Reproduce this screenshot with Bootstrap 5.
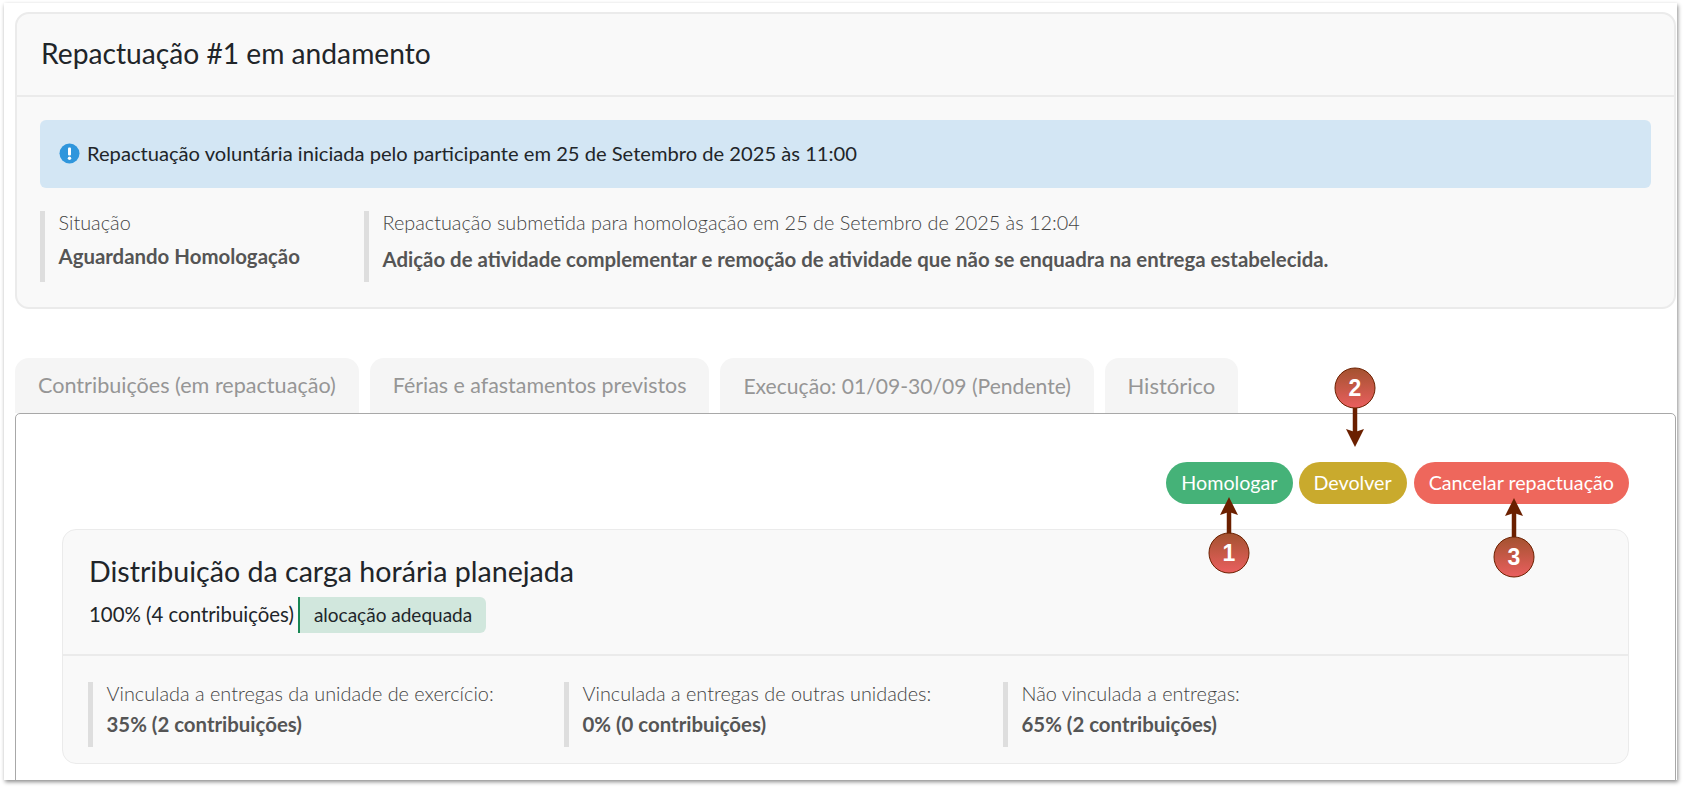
<!doctype html>
<html lang="pt-BR">

<head>
    <meta charset="utf-8">
    <meta name="viewport" content="width=device-width, initial-scale=1">
    <link href="https://cdn.jsdelivr.net/npm/bootstrap@5.3.3/dist/css/bootstrap.min.css" rel="stylesheet">
    <title>Repactuação</title>
    <style>
        html, body { height: 100%; overflow: hidden; background: #fff; }
        body { font-family: Lato, "Liberation Sans", sans-serif; font-size: 20.4px; color: #212529; }

        .quadro { position: relative; width: 1673px; height: 777px; margin: 3px 0 0 4px; padding: 9px 1px 0 11px; background: #fff; box-shadow: 1px 2px 4px rgba(0, 0, 0, .45); overflow: hidden; }

        .painel { background: #f9f9f9; border: 2px solid #ebebeb; border-radius: 14px; }
        .painel > .card-header { background: transparent; border-bottom: 2px solid #ebebeb; display: flex; align-items: center; }
        .painel-topo { height: 83px; padding: 0 24px; }
        .painel-topo h1 { font-size: 28.2px; font-weight: 400; margin: 0 0 2px; }
        .painel-corpo { padding: 23px 23px 0; height: 210px; }
        .aviso { height: 68px; margin: 0 0 23px; padding: 0 19px 2px; border: 0; border-radius: 6px; background: #d3e6f4; color: #212529; font-size: 20.15px; }
        .aviso svg { margin-right: 7px; }

        .dado { border-left: 5px solid #dedede; padding-left: 13.5px; color: #444; font-weight: 300; font-size: 19.85px; line-height: 1.15; }
        .dado strong { display: block; font-weight: 700; font-size: 20.4px; color: #555; }
        .dado-situacao { width: 324px; height: 71px; }
        .dado-situacao strong { margin-top: 11px; }
        .dado-motivo strong { margin-top: 14px; }

        .abas { margin-top: 49px; border: 0; gap: 11px; }
        .abas .nav-link { height: 55px; padding: 0 23px; display: flex; align-items: center; background: #f5f5f5; color: #969696; border: 0; border-radius: 14px 14px 0 0; font-size: 21.6px; margin: 0; }
        .abas .aba-ferias { font-size: 21.4px; }
        .abas .aba-execucao { font-size: 21.1px; }
        .abas .aba-historico { font-size: 22px; padding: 0 22.5px; }
        .conteudo { border: 1px solid #a8a8a8; border-radius: 5px 5px 0 0; padding: 48px 46px 60px 46px; background: #fff; }

        .acoes { margin-bottom: 25px; gap: 6px; }
        .acao { height: 42px; padding: 0 15px; border: 0; font-size: 19.7px; color: #fff; display: flex; align-items: center; }
        .acao:hover { color: #fff; }
        .acao-homologar { background: #45b278; }
        .acao-devolver { background: #c9aa2d; margin-right: 1px; }
        .acao-cancelar { background: #ee675c; }

        .cartao-carga { border-width: 1.5px; }
        .carga-topo { height: 126px; padding: 3px 25px 0 26px; flex-direction: column; align-items: flex-start !important; justify-content: center; }
        .carga-topo h2 { font-size: 28.6px; font-weight: 400; margin: 0 0 9px; }
        .alocacao { display: inline-block; height: 36px; line-height: 36px; margin-left: 4px; padding: 0 14px; background: #d1e7dd; border-left: 2px solid #198754; border-radius: 0 6px 6px 0; font-size: 19px; }
        .carga-corpo { padding: 26px 25px 16px; height: 107px; }
        .carga-corpo .dado { height: 65px; }
        .carga-corpo .dado strong { margin-top: 8px; }
        .col-a { width: 476px; }
        .col-b { width: 439px; }

        .anotacoes { position: absolute; left: 0; top: 0; pointer-events: none; }
        .anotacoes text { font-family: "Liberation Sans", sans-serif; font-weight: 700; font-size: 23px; fill: #fff; text-anchor: middle; }
    </style>
</head>

<body>
    <div class="quadro">
        <div class="card painel">
            <div class="card-header painel-topo">
                <h1>Repactuação #1 em andamento</h1>
            </div>
            <div class="card-body painel-corpo">
                <div class="alert aviso d-flex align-items-center" role="alert">
                    <svg width="21" height="21" viewBox="0 0 21 21">
                        <circle cx="10.5" cy="10.5" r="10" fill="#2f96dc" />
                        <rect x="9" y="4.5" width="3" height="8" rx="1" fill="#fff" />
                        <circle cx="10.5" cy="15.2" r="1.7" fill="#fff" />
                    </svg>
                    Repactuação voluntária iniciada pelo participante em 25 de Setembro de 2025 às 11:00
                </div>
                <div class="d-flex">
                    <div class="dado dado-situacao">
                        Situação
                        <strong>Aguardando Homologação</strong>
                    </div>
                    <div class="dado dado-motivo">
                        Repactuação submetida para homologação em 25 de Setembro de 2025 às 12:04
                        <strong>Adição de atividade complementar e remoção de atividade que não se enquadra na entrega estabelecida.</strong>
                    </div>
                </div>
            </div>
        </div>

        <ul class="nav nav-tabs abas">
            <li class="nav-item"><a class="nav-link" href="#">Contribuições (em repactuação)</a></li>
            <li class="nav-item"><a class="nav-link aba-ferias" href="#">Férias e afastamentos previstos</a></li>
            <li class="nav-item"><a class="nav-link aba-execucao" href="#">Execução: 01/09-30/09 (Pendente)</a></li>
            <li class="nav-item"><a class="nav-link aba-historico" href="#">Histórico</a></li>
        </ul>

        <div class="conteudo">
            <div class="d-flex justify-content-end acoes">
                <button type="button" class="btn rounded-pill acao acao-homologar">Homologar</button>
                <button type="button" class="btn rounded-pill acao acao-devolver">Devolver</button>
                <button type="button" class="btn rounded-pill acao acao-cancelar">Cancelar repactuação</button>
            </div>

            <div class="card painel cartao-carga">
                <div class="card-header carga-topo">
                    <h2>Distribuição da carga horária planejada</h2>
                    <div>100% (4 contribuições)<span class="alocacao">alocação adequada</span></div>
                </div>
                <div class="card-body carga-corpo d-flex">
                    <div class="dado col-a">Vinculada a entregas da unidade de exercício:<strong>35% (2 contribuições)</strong></div>
                    <div class="dado col-b">Vinculada a entregas de outras unidades:<strong>0% (0 contribuições)</strong></div>
                    <div class="dado">Não vinculada a entregas:<strong>65% (2 contribuições)</strong></div>
                </div>
            </div>
        </div>

        <!-- setas e numeros da anotacao, coordenadas relativas ao quadro -->
        <svg class="anotacoes" width="1673" height="777" viewBox="4 3 1673 777">
            <defs>
                <linearGradient id="bola" x1="0" y1="0" x2="0" y2="1">
                    <stop offset="0" stop-color="#a3522f" />
                    <stop offset="1" stop-color="#ea5f5f" />
                </linearGradient>
            </defs>

            <path d="M1229 535V510" stroke="#6b2000" stroke-width="4.5" />
            <path d="M1229 497l-9 18 9-3 9 3z" fill="#6b2000" />
            <circle cx="1229" cy="553" r="20" fill="url(#bola)" stroke="#6b2000" />
            <text x="1229" y="561">1</text>

            <path d="M1355 408V435" stroke="#6b2000" stroke-width="4.5" />
            <path d="M1355 447l-9-18 9 3 9-3z" fill="#6b2000" />
            <circle cx="1355" cy="388" r="20" fill="url(#bola)" stroke="#6b2000" />
            <text x="1355" y="396">2</text>

            <path d="M1514 537V510" stroke="#6b2000" stroke-width="4.5" />
            <path d="M1514 498l-9 18 9-3 9 3z" fill="#6b2000" />
            <circle cx="1514" cy="557" r="20" fill="url(#bola)" stroke="#6b2000" />
            <text x="1514" y="565">3</text>
        </svg>
    </div>

    <script src="https://cdn.jsdelivr.net/npm/bootstrap@5.3.3/dist/js/bootstrap.bundle.min.js"></script>
</body>

</html>
